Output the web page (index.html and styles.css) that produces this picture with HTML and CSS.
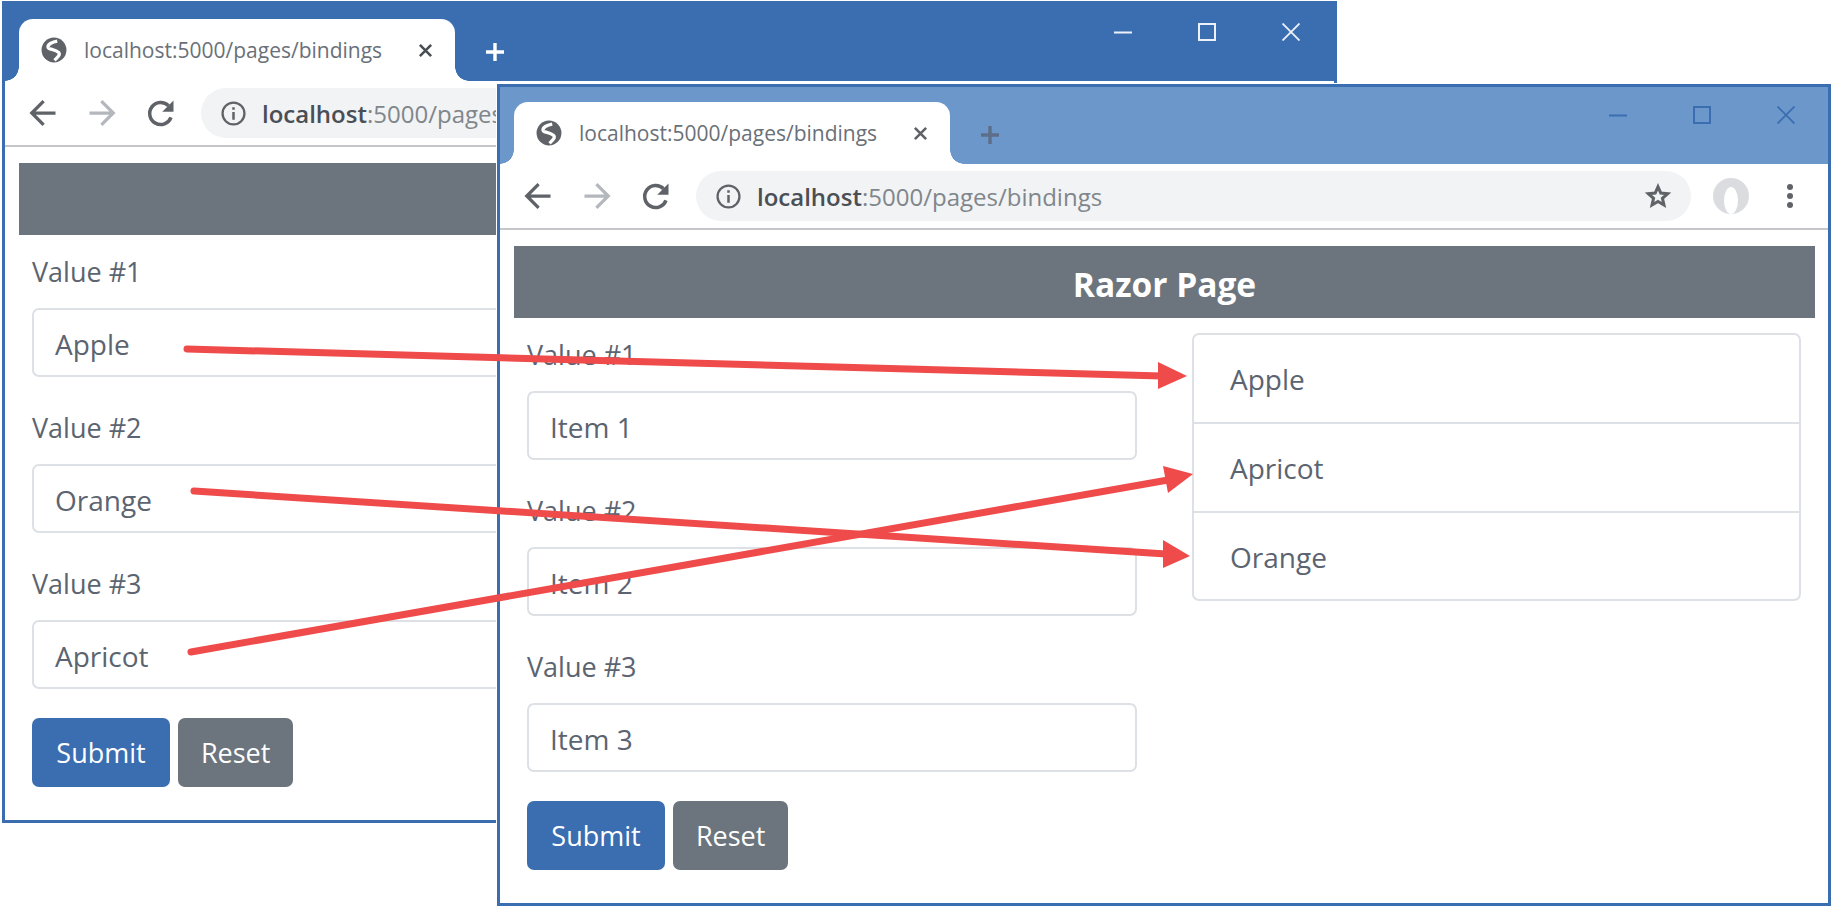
FILE: index.html

```html
<!DOCTYPE html>
<html>
<head>
    <title>Razor Page bindings</title>
    <link rel="stylesheet" href="styles.css">
</head>
<body>

<!-- shared icons for both browser windows -->
<svg class="sprite" width="0" height="0">
    <symbol id="iconGlobe" viewBox="0 0 24 24">
        <circle cx="12" cy="12" r="11.500" fill="#5f6368"/>
        <path fill="none" stroke="#fff" stroke-width="3" d="M15 3.800C11 4.500 6 6.500 6.500 9.500 7 11.800 13 11 16.500 14.500 18 16.500 15 19 12.500 21.500"/>
    </symbol>
    <symbol id="iconClose" viewBox="0 0 16 16">
        <path d="M2 2l12 12M14 2L2 14" fill="none" stroke="currentColor" stroke-width="2.800"/>
    </symbol>
    <symbol id="iconPlus" viewBox="0 0 20 20">
        <path d="M10 1v18M1 10h18" fill="none" stroke="currentColor" stroke-width="3.400"/>
    </symbol>
    <symbol id="iconBack" viewBox="0 0 24 24">
        <path d="M22 12H4M12.500 2.500L3 12l9.500 9.500" fill="none" stroke="currentColor" stroke-width="2.600"/>
    </symbol>
    <symbol id="iconForward" viewBox="0 0 24 24">
        <path d="M2 12h18M11.500 2.500L21 12l-9.500 9.500" fill="none" stroke="currentColor" stroke-width="2.600"/>
    </symbol>
    <symbol id="iconReload" viewBox="0 0 24 24">
        <path d="M20 15.500A8.800 8.800 0 1 1 18 6.200" fill="none" stroke="currentColor" stroke-width="2.800"/>
        <path d="M22 2v9h-9z" fill="currentColor"/>
    </symbol>
    <symbol id="iconInfo" viewBox="0 0 24 24">
        <circle cx="12" cy="12" r="10.500" fill="none" stroke="currentColor" stroke-width="2.200"/>
        <path d="M10.800 10.500h2.400V18h-2.400zM10.800 6h2.400v2.500h-2.400z" fill="currentColor"/>
    </symbol>
    <symbol id="iconStar" viewBox="0 0 24 24">
        <path d="M12 3.500l2.600 5.800 6.300.6-4.800 4.200 1.400 6.200L12 17.100l-5.500 3.200 1.400-6.200-4.800-4.200 6.300-.6z" fill="none" stroke="currentColor" stroke-width="2.800"/>
    </symbol>
    <symbol id="iconMin" viewBox="0 0 18 18">
        <path d="M0 9.500h18" fill="none" stroke="currentColor" stroke-width="2"/>
    </symbol>
    <symbol id="iconMax" viewBox="0 0 18 18">
        <path d="M1 1h16v16H1z" fill="none" stroke="currentColor" stroke-width="2"/>
    </symbol>
    <symbol id="iconX" viewBox="0 0 18 18">
        <path d="M.5.500l17 17M17.500.500l-17 17" fill="none" stroke="currentColor" stroke-width="1.800"/>
    </symbol>
</svg>

<!-- window at the back -->
<div class="window windowBack">
    <div class="titleBar">
        <div class="tab">
            <svg class="tabGlobe"><use href="#iconGlobe"/></svg>
            <span class="tabTitle">localhost:5000/pages/bindings</span>
            <svg class="tabClose"><use href="#iconClose"/></svg>
        </div>
        <svg class="newTab"><use href="#iconPlus"/></svg>
        <div class="windowButtons">
            <svg><use href="#iconMin"/></svg>
            <svg><use href="#iconMax"/></svg>
            <svg><use href="#iconX"/></svg>
        </div>
    </div>
    <div class="toolBar">
        <svg class="navIcon"><use href="#iconBack"/></svg>
        <svg class="navIcon navDisabled"><use href="#iconForward"/></svg>
        <svg class="navIcon"><use href="#iconReload"/></svg>
        <div class="omnibox">
            <svg class="infoIcon"><use href="#iconInfo"/></svg>
            <span class="url"><b>localhost</b>:5000/pages/bindings</span>
        </div>
    </div>
    <div class="page">
        <div class="heading"></div>
        <div class="columns">
            <form class="bindForm">
                <div class="formGroup">
                    <label>Value #1</label>
                    <input class="formControl" type="text" value="Apple">
                </div>
                <div class="formGroup">
                    <label>Value #2</label>
                    <input class="formControl" type="text" value="Orange">
                </div>
                <div class="formGroup">
                    <label>Value #3</label>
                    <input class="formControl" type="text" value="Apricot">
                </div>
                <button class="btn btnPrimary" type="button">Submit</button>
                <button class="btn btnSecondary" type="button">Reset</button>
            </form>
        </div>
    </div>
</div>

<!-- window at the front -->
<div class="window windowFront">
    <div class="titleBar">
        <div class="tab">
            <svg class="tabGlobe"><use href="#iconGlobe"/></svg>
            <span class="tabTitle">localhost:5000/pages/bindings</span>
            <svg class="tabClose"><use href="#iconClose"/></svg>
        </div>
        <svg class="newTab"><use href="#iconPlus"/></svg>
        <div class="windowButtons">
            <svg><use href="#iconMin"/></svg>
            <svg><use href="#iconMax"/></svg>
            <svg><use href="#iconX"/></svg>
        </div>
    </div>
    <div class="toolBar">
        <svg class="navIcon"><use href="#iconBack"/></svg>
        <svg class="navIcon navDisabled"><use href="#iconForward"/></svg>
        <svg class="navIcon"><use href="#iconReload"/></svg>
        <div class="omnibox">
            <svg class="infoIcon"><use href="#iconInfo"/></svg>
            <span class="url"><b>localhost</b>:5000/pages/bindings</span>
            <svg class="starIcon"><use href="#iconStar"/></svg>
        </div>
        <div class="avatar"><span class="avatarInner"></span></div>
        <div class="menuDots"><i></i><i></i><i></i></div>
    </div>
    <div class="page">
        <div class="heading">Razor Page</div>
        <div class="columns">
            <form class="bindForm">
                <div class="formGroup">
                    <label>Value #1</label>
                    <input class="formControl" type="text" value="Item 1">
                </div>
                <div class="formGroup">
                    <label>Value #2</label>
                    <input class="formControl" type="text" value="Item 2">
                </div>
                <div class="formGroup">
                    <label>Value #3</label>
                    <input class="formControl" type="text" value="Item 3">
                </div>
                <button class="btn btnPrimary" type="button">Submit</button>
                <button class="btn btnSecondary" type="button">Reset</button>
            </form>
            <ul class="listGroup">
                <li>Apple</li>
                <li>Apricot</li>
                <li>Orange</li>
            </ul>
        </div>
    </div>
</div>

<!-- red arrows lie over both windows -->
<svg class="arrows" width="1833" height="907">
    <g stroke="#ef4b4b" stroke-width="7" stroke-linecap="round" fill="none">
        <path d="M187 349L1162 376"/>
        <path d="M194 491L1166 554"/>
        <path d="M191 652L1168 480"/>
    </g>
    <g fill="#ef4b4b">
        <path d="M1187 376L1158 362V389z"/>
        <path d="M1190 556L1163 540V568z"/>
        <path d="M1193 474L1163 466L1168 493z"/>
    </g>
</svg>

</body>
</html>
```

FILE: styles.css

```css
body {
    margin: 0;
    width: 1833px;
    height: 907px;
    overflow: hidden;
    background-color: #fff;
    font-family: "Open Sans", "Noto Sans", sans-serif;
    color: #5b6470;
}

.sprite {
    position: absolute;
}

/* windows sit on a free canvas */
.window {
    position: absolute;
    box-sizing: border-box;
    height: 822px;
    border: 3px solid #3a6eb0;
    background-color: #fff;
    overflow: hidden;
}

.windowBack {
    left: 2px;
    top: 1px;
    width: 1335px;
}

.windowFront {
    left: 497px;
    top: 84px;
    width: 1334px;
    outline: 1px solid #fff;
}

.titleBar {
    display: flex;
    align-items: flex-start;
    height: 77px;
    padding-left: 14px;
    background-color: #3a6eb0;
    color: #eef2f8;
}

.windowFront .titleBar {
    background-color: #6c97cb;
    color: #3a6eb0;
}

.tab {
    position: relative;
    display: flex;
    align-items: center;
    box-sizing: border-box;
    width: 436px;
    height: 62px;
    margin-top: 15px;
    padding: 0 22px;
    background-color: #fff;
    border-radius: 14px 14px 0 0;
    color: #5f6368;
}

/* the curved feet of the tab */
.tab::before,
.tab::after {
    content: "";
    position: absolute;
    bottom: 0;
    width: 14px;
    height: 14px;
}

.tab::before {
    left: -14px;
    background: radial-gradient(circle at 0 0, transparent 13.500px, #fff 14px);
}

.tab::after {
    right: -14px;
    background: radial-gradient(circle at 100% 0, transparent 13.500px, #fff 14px);
}

.tabGlobe {
    width: 26px;
    height: 26px;
    flex: none;
}

.tabTitle {
    margin-left: 17px;
    font-size: 21px;
    white-space: nowrap;
    color: #6a7078;
}

.tabClose {
    width: 15px;
    height: 15px;
    margin-left: auto;
    color: #4a4f55;
}

.windowFront .tabClose {
    color: #5f6368;
}

.newTab {
    width: 20px;
    height: 20px;
    margin: 38px 0 0 30px;
    color: #fff;
}

.windowFront .newTab {
    color: #5d6f88;
}

.windowButtons {
    display: flex;
    gap: 66px;
    margin: 19px 0 0 auto;
    padding-right: 34px;
}

.windowFront .windowButtons {
    padding-right: 33px;
}

.windowButtons svg {
    width: 18px;
    height: 18px;
}

.toolBar {
    display: flex;
    align-items: center;
    box-sizing: border-box;
    height: 66px;
    padding: 0 20px 0 23px;
    border-bottom: 2px solid #c4c6ca;
    background-color: #fff;
    color: #5f6368;
}

.navIcon {
    width: 30px;
    height: 30px;
    flex: none;
    margin-right: 29px;
}

.navDisabled {
    color: #b4b8bd;
}

.omnibox {
    display: flex;
    align-items: center;
    box-sizing: border-box;
    width: 995px;
    height: 50px;
    margin-left: -4px;
    padding: 0 20px;
    border-radius: 25px;
    background-color: #f1f3f4;
    flex: none;
}

.infoIcon {
    width: 25px;
    height: 25px;
    flex: none;
}

.url {
    margin-left: 16px;
    font-size: 24px;
    white-space: nowrap;
    color: #80868b;
}

.url b {
    font-weight: 600;
    color: #4a4f55;
}

.starIcon {
    width: 26px;
    height: 26px;
    margin-left: auto;
    color: #5f6368;
}

.avatar {
    display: flex;
    align-items: flex-end;
    justify-content: center;
    width: 36px;
    height: 36px;
    margin-left: 22px;
    border-radius: 50%;
    background-color: #dadce0;
}

.avatarInner {
    width: 14px;
    height: 27px;
    border-radius: 50%;
    background-color: #fff;
}

.menuDots {
    display: flex;
    flex-direction: column;
    gap: 3px;
    margin-left: 38px;
}

.menuDots i {
    display: block;
    width: 6px;
    height: 6px;
    border-radius: 50%;
    background-color: #5f6368;
}

.page {
    padding: 16px 13px 0 14px;
}

.heading {
    height: 72px;
    background-color: #6c757d;
    color: #fff;
    font-size: 33.500px;
    font-weight: 700;
    line-height: 76px;
    text-align: center;
}

.columns {
    display: grid;
    grid-template-columns: 610px 609px;
    gap: 55px;
    padding: 16px 13px 0;
}

.formGroup {
    margin-bottom: 30px;
}

.formGroup:last-of-type {
    margin-bottom: 29px;
}

label {
    display: block;
    height: 42px;
    margin-bottom: 15px;
    font-size: 27px;
    line-height: 42px;
}

.formControl {
    display: block;
    box-sizing: border-box;
    width: 100%;
    height: 69px;
    padding: 3px 21px 0;
    border: 2px solid #dde0e4;
    border-radius: 7px;
    background-color: #fff;
    color: #5b6470;
    font-family: inherit;
    font-size: 28px;
}

.btn {
    box-sizing: border-box;
    height: 69px;
    margin-right: 4px;
    padding: 0;
    border: 0;
    border-radius: 7px;
    color: #fff;
    font-family: inherit;
    font-size: 27px;
}

.btnPrimary {
    width: 138px;
    background-color: #3a6eb0;
}

.btnSecondary {
    width: 115px;
    background-color: #6c757d;
}

.listGroup {
    margin: -1px 0 0;
    padding: 0;
    height: 268px;
    box-sizing: border-box;
    border: 2px solid #dde0e4;
    border-radius: 7px;
    list-style: none;
    font-size: 28px;
}

.listGroup li {
    box-sizing: border-box;
    height: 89px;
    padding: 0 36px;
    line-height: 88px;
    border-bottom: 2px solid #dde0e4;
}

.listGroup li:last-child {
    border-bottom: 0;
}

.arrows {
    position: absolute;
    left: 0;
    top: 0;
}
```
